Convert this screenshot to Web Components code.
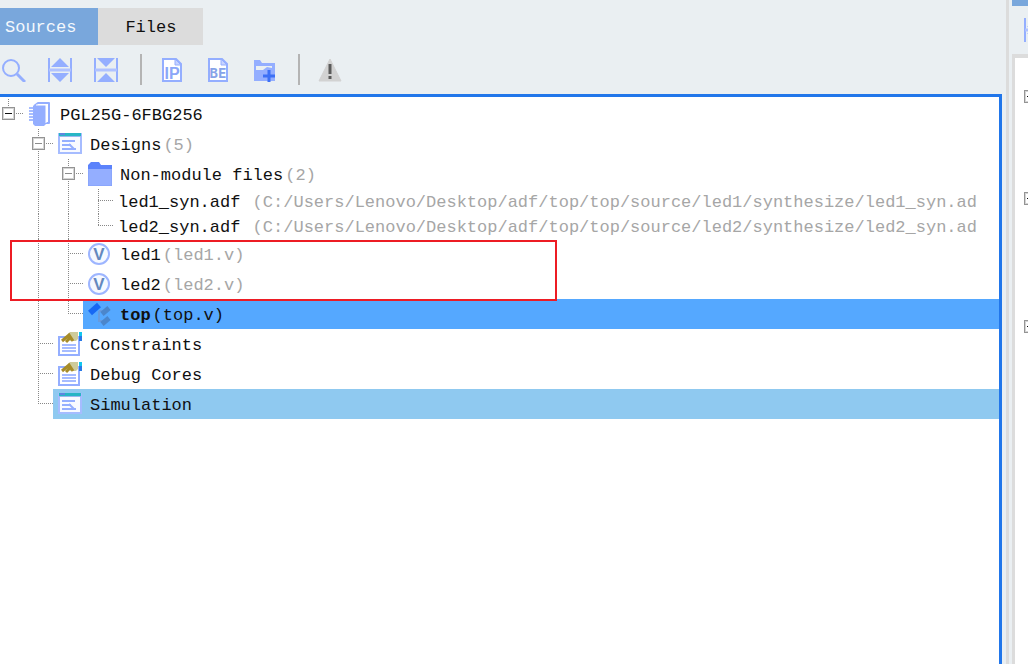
<!DOCTYPE html>
<html lang="en">
<head>
<meta charset="utf-8">
<title>Sources</title>
<style>
	body {
		margin: 0;
		height: 100vh;
		overflow: hidden;
		background: #eaeff2;
		color: #101010;
		font-family: 'Liberation Mono', monospace;
		font-size: 17px;
	}
</style>
</head>
<body>

<ide-workspace>

	<ide-panel>
		<ide-tab slot="tabs" active>Sources</ide-tab>
		<ide-tab slot="tabs">Files</ide-tab>

		<tool-group slot="tools">
			<tool-button icon="search" label="Search"></tool-button>
			<tool-button icon="expand" label="Expand all"></tool-button>
			<tool-button icon="collapse" label="Collapse all"></tool-button>
		</tool-group>
		<tool-group slot="tools">
			<tool-button icon="ip" label="IP"></tool-button>
			<tool-button icon="be" label="BE"></tool-button>
			<tool-button icon="add" label="Add source"></tool-button>
		</tool-group>
		<tool-group slot="tools">
			<tool-button icon="warning" label="Messages"></tool-button>
		</tool-group>

		<source-tree>
			<tree-row guides="L" icon="chip" expander="dark">PGL25G-6FBG256</tree-row>
			<tree-row guides=" +" icon="window" expander="light">Designs<span slot="note">(5)</span></tree-row>
			<tree-row guides=" |+" icon="folder" expander="light">Non-module files<span slot="note">(2)</span></tree-row>
			<tree-row guides=" ||+" compact>led1_syn.adf<span slot="note">&nbsp;(C:/Users/Lenovo/Desktop/adf/top/top/source/led1/synthesize/led1_syn.ad</span></tree-row>
			<tree-row guides=" ||L" compact>led2_syn.adf<span slot="note">&nbsp;(C:/Users/Lenovo/Desktop/adf/top/top/source/led2/synthesize/led2_syn.ad</span></tree-row>
			<tree-row guides=" |+" icon="verilog">led1<span slot="note">(led1.v)</span></tree-row>
			<tree-row guides=" |+" icon="verilog">led2<span slot="note">(led2.v)</span></tree-row>
			<tree-row guides=" |L" icon="top" selected><b>top</b><span slot="note">(top.v)</span></tree-row>
			<tree-row guides=" +" icon="props">Constraints</tree-row>
			<tree-row guides=" +" icon="props">Debug Cores</tree-row>
			<tree-row guides=" L" icon="window" related>Simulation</tree-row>
			<mark-box slot="overlay"></mark-box>
		</source-tree>
	</ide-panel>

	<side-panel slot="side"></side-panel>

</ide-workspace>

<script>

const svg = (body) => `<svg width="24" height="24" viewBox="0 0 24 24" aria-hidden="true">${body}</svg>`

const page = '<path d="M3 1h13l5 5v17H3z" fill="#fff" stroke="#94aeff" stroke-width="2"/><path d="M15 1v6h6z" fill="#c6d3ff" stroke="#94aeff"/>'

const icons = {

	search: svg('<circle cx="9" cy="10" r="8" fill="none" stroke="#94aeff" stroke-width="2"/><path d="M15 16l8 8" stroke="#94aeff" stroke-width="3"/>'),

	expand: svg('<path d="M1 0v24M23 0v24" stroke="#94aeff" stroke-width="2"/><path d="M1 12h22" stroke="#b0c2ff" stroke-width="3"/><path d="M12 0l9 9H3zM3 15h18l-9 9z" fill="#94aeff"/>'),

	collapse: svg('<path d="M1 0v24M23 0v24" stroke="#94aeff" stroke-width="2"/><path d="M1 12h22" stroke="#b0c2ff" stroke-width="3"/><path d="M3 0h18l-9 9zM12 15l9 9H3z" fill="#94aeff"/>'),

	ip: svg(page + '<text x="12" y="21" text-anchor="middle" font-family="Liberation Sans, sans-serif" font-weight="bold" font-size="16" fill="#8ba7f8">IP</text>'),

	be: svg(page + '<text x="12" y="20" text-anchor="middle" font-family="DejaVu Sans Mono, monospace" font-weight="bold" font-size="14" fill="#86a3e8">BE</text>'),

	add: svg('<path d="M2 2h6l2 3h13v18H2z" fill="#94aeff"/><path d="M4 10V8h16v2l-5-1-4 3H4z" fill="#eaeff2"/><path d="M17 12v12M11 18h12" stroke="#3d70f5" stroke-width="3"/>'),

	warning: svg('<path d="M12 1l11 22H1z" fill="#d2d2d2" stroke="#d2d2d2" stroke-linejoin="round"/><path d="M12 6v10M12 18v3" stroke="#5a5a5a" stroke-width="3"/>'),

	chip: svg('<path d="M1 6h5M1 9h5M1 12h5M1 15h5M1 18h5" stroke="#a6bcff" stroke-width="2"/><path d="M6 4l4-3h11v20h-4" fill="#fff" stroke="#94aeff" stroke-width="2" stroke-linejoin="round"/><path d="M5 4l2-1h11v19l-2 2H7l-2-2z" fill="#94aeff"/><path d="M8 3h10v18" fill="none" stroke="#fff" stroke-width="1"/>'),

	window: svg('<path d="M1 2h22v19H1z" fill="#f8faff" stroke="#a6bcff" stroke-width="2"/><path d="M1 1h22v3H1z" fill="#27b5c5"/><path d="M1 4h22v1H1z" fill="#9ab7ee"/><path d="M2 2h5" stroke="#5d87df" stroke-width="2"/><path d="M4 9h13M4 13h9M4 17h14" stroke="#94aeff" stroke-width="2"/><path d="M11 12l5 5" stroke="#94aeff" stroke-width="2"/>'),

	folder: svg('<path d="M0 3l3-3h8l2 3h11v5H0z" fill="#5b82fb"/><path d="M0 7h24v17H0z" fill="#94aeff"/><path d="M0 7v17h24V7" fill="none" stroke="#809efa"/>'),

	verilog: svg('<circle cx="11" cy="12" r="10" fill="#f6f9ff" stroke="#9db5ff" stroke-width="2"/><text x="11" y="18" text-anchor="middle" font-family="Liberation Sans, sans-serif" font-weight="bold" font-size="17" fill="#6488bd">V</text>'),

	top: svg('<path d="M11 9v10h6M11 9h6" fill="none" stroke="#679bdf" stroke-width="2"/><path d="M2 11l9-8" stroke="#1768f4" stroke-width="6"/><path d="M14 12l7-6M14 22l7-6" stroke="#4b86cc" stroke-width="5"/>'),

	props: svg('<path d="M1 5h20v18H1z" fill="#fff" stroke="#94aeff" stroke-width="2"/><path d="M4 13h14M4 16h14M4 19h14" stroke="#a6bcff" stroke-width="2"/><path d="M10 2l2-2h8v7l-2 2h-6z" fill="#cecb9a"/><path d="M4 9l7-6 4 6M8 10l5-5" fill="none" stroke="#a78c28" stroke-width="3"/><path d="M21 0h3v5h-3z" fill="#12c6ee"/><path d="M21 4h3v5h-3z" fill="#2878e8"/>'),

}

// dotted connector lines for one tree column
const guide = (kind, width, height) => {

	const mid = Math.floor(height / 2) - 1
	const down = kind === 'L' ? mid : height
	let d = ''

	if (kind !== ' ') d += `<rect x="8" width="1" height="${down}" fill="url(#v)"/>`
	if (kind === '+' || kind === 'L') d += `<rect x="8" y="${mid}" width="${width - 8}" height="1" fill="url(#h)"/>`

	return `<svg width="${width}" height="${height}" aria-hidden="true">
		<defs>
			<pattern id="v" width="1" height="2" patternUnits="userSpaceOnUse"><rect width="1" height="1" fill="#888"/></pattern>
			<pattern id="h" width="2" height="1" patternUnits="userSpaceOnUse"><rect width="1" height="1" fill="#888"/></pattern>
		</defs>
		${d}
	</svg>`

}

class Base extends HTMLElement {

	constructor(){

		super()

		this.shadow = this.attachShadow({mode: 'open'})

	}

	connectedCallback() {

		this.render()

	}

}

class Workspace extends Base {

	render(){

		this.shadow.innerHTML = `
		<style>
			:host{
				display: grid;
				grid-template-columns: minmax(0, 1fr) 3px 16px;
				column-gap: 3px;
				height: 100%;
				overflow: hidden;
			}
			.splitter{
				background: #dcdcdc;
			}
		</style>
		<slot></slot>
		<div class="splitter"></div>
		<slot name="side"></slot>
	`

	}

}

class Panel extends Base {

	render(){

		this.shadow.innerHTML = `
		<style>
			:host{
				display: flex;
				flex-direction: column;
				min-width: 0;
				padding-right: 1px;
			}
			.tabs{
				display: flex;
				height: 37px;
				padding-top: 8px;
			}
			.tools{
				display: flex;
				align-items: center;
				height: 49px;
				padding-left: 2px;
			}
		</style>
		<div class="tabs" role="tablist"><slot name="tabs"></slot></div>
		<div class="tools" role="toolbar"><slot name="tools"></slot></div>
		<slot></slot>
	`

	}

}

class Tab extends Base {

	render(){

		this.shadow.innerHTML = `
		<style>
			:host{
				display: flex;
			}
			button{
				padding: 2px 27px 0;
				border: 0;
				background: #dcdcdc;
				color: inherit;
				font: inherit;
			}
			:host([active]) button{
				padding: 2px 22px 0 5px;
				background: #79a7dc;
				color: #f4f8fc;
			}
		</style>
		<button role="tab" aria-selected="${this.hasAttribute('active')}"><slot></slot></button>
	`

	}

}

class ToolGroup extends Base {

	render(){

		this.shadow.innerHTML = `
		<style>
			:host{
				display: flex;
				align-items: center;
				gap: 22px;
				height: 31px;
				padding: 0 22px 0 18px;
				border-right: 2px solid #b4b4b4;
			}
			:host(:first-of-type){
				padding-left: 0;
			}
			:host(:last-of-type){
				border: 0;
			}
		</style>
		<slot></slot>
	`

	}

}

class ToolButton extends Base {

	render(){

		this.shadow.innerHTML = `
		<style>
			:host{
				display: flex;
			}
			button{
				display: flex;
				padding: 0;
				border: 0;
				background: none;
			}
		</style>
		<button aria-label="${this.getAttribute('label')}">${icons[this.getAttribute('icon')]}</button>
	`

	}

}

class SourceTree extends Base {

	render(){

		this.shadow.innerHTML = `
		<style>
			:host{
				display: block;
				flex: 1;
				position: relative;
				min-height: 0;
				padding-top: 2px;
				border: solid #2176ea;
				border-width: 3px 3px 0 0;
				background: #fff;
				overflow: hidden;
			}
		</style>
		<div role="tree"><slot></slot></div>
		<slot name="overlay"></slot>
	`

	}

}

class TreeRow extends Base {

	render(){

		const kinds = [...this.getAttribute('guides')]
		const height = this.hasAttribute('compact') ? 25 : 30
		const last = kinds.length - 1
		const icon = this.getAttribute('icon')
		const expander = this.hasAttribute('expander') ? '<tree-expander></tree-expander>' : ''

		this.shadow.innerHTML = `
		<style>
			:host{
				display: flex;
				white-space: nowrap;
			}
			.guide{
				display: grid;
				flex: none;
			}
			.guide > *{
				grid-area: 1 / 1;
			}
			tree-expander{
				margin: 8px 0 0 2px;
				color: #8c8c8c;
			}
			:host([expander=dark]) tree-expander{
				color: #111;
			}
			.item{
				display: flex;
				flex: 1;
				align-items: center;
				min-width: 0;
				padding-left: 5px;
			}
			.icon{
				display: flex;
				margin-right: 8px;
			}
			.text{
				display: flex;
				gap: 2px;
				padding-top: 2px;
			}
			.note{
				color: #a6a6a6;
			}
			:host([selected]) .item{
				background: #55a8ff;
			}
			:host([selected]) .note{
				color: inherit;
			}
			:host([related]) .item{
				background: #8fc9f0;
			}
		</style>
		${kinds.map((kind, i) => `<div class="guide">${guide(kind, i === last ? 23 : 30, height)}${i === last ? expander : ''}</div>`).join('')}
		<div class="item" role="treeitem">
			${icon ? `<span class="icon">${icons[icon]}</span>` : ''}
			<span class="text"><span><slot></slot></span><span class="note"><slot name="note"></slot></span></span>
		</div>
	`

	}

}

class TreeExpander extends Base {

	render(){

		this.shadow.innerHTML = `
		<style>
			:host{
				display: block;
				width: 13px;
				height: 13px;
			}
			button{
				display: flex;
				align-items: center;
				justify-content: center;
				box-sizing: border-box;
				width: 13px;
				height: 13px;
				padding: 0;
				border: 1px solid #949494;
				box-shadow: inset 0 0 0 1px #d4d4d4;
				background: #fff;
				color: inherit;
			}
			i{
				width: 7px;
				height: 1px;
				background: currentColor;
			}
		</style>
		<button aria-label="Toggle"><i></i></button>
	`

	}

}

class MarkBox extends Base {

	render(){

		this.shadow.innerHTML = `
		<style>
			:host{
				position: absolute;
				top: 143px;
				left: 10px;
				box-sizing: border-box;
				width: 547px;
				height: 61px;
				border: 2px solid #ed1c24;
				pointer-events: none;
			}
		</style>
	`

	}

}

// neighbouring panel, only its left edge is in view
class SidePanel extends Base {

	render(){

		this.shadow.innerHTML = `
		<style>
			:host{
				display: flex;
				flex-direction: column;
				overflow: hidden;
			}
			.tab{
				height: 6px;
				background: #79a7dc;
			}
			.tools{
				display: flex;
				align-items: center;
				height: 48px;
				padding-left: 12px;
			}
			.body{
				flex: 1;
				padding: 32px 0 0 9px;
				border: solid #dcdcdc;
				border-width: 4px 0 0 3px;
				background: #fff;
				color: #111;
			}
			tree-expander{
				margin-bottom: 89px;
			}
			tree-expander + tree-expander{
				margin-bottom: 115px;
			}
		</style>
		<div class="tab"></div>
		<div class="tools"><tool-button icon="expand" label="Expand all"></tool-button></div>
		<div class="body">
			<tree-expander></tree-expander>
			<tree-expander></tree-expander>
			<tree-expander></tree-expander>
		</div>
	`

	}

}

customElements.define('tree-expander', TreeExpander)
customElements.define('tree-row', TreeRow)
customElements.define('source-tree', SourceTree)
customElements.define('mark-box', MarkBox)
customElements.define('tool-button', ToolButton)
customElements.define('tool-group', ToolGroup)
customElements.define('ide-tab', Tab)
customElements.define('ide-panel', Panel)
customElements.define('side-panel', SidePanel)
customElements.define('ide-workspace', Workspace)

</script>
</body>
</html>
